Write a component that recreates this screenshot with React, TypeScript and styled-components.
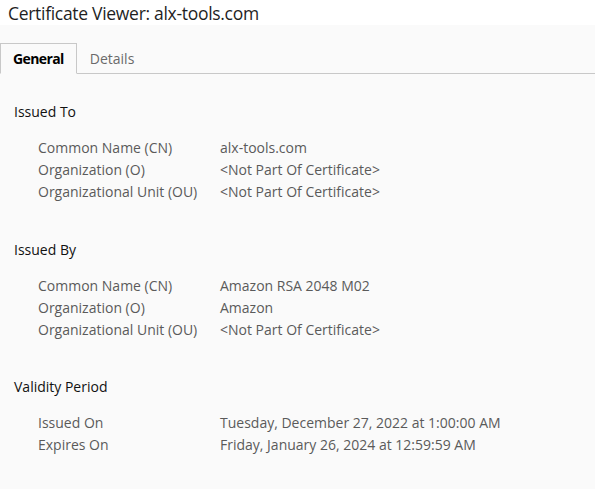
import React from "react";
import styled, { createGlobalStyle } from "styled-components";

const Global = createGlobalStyle`
  html, body { margin: 0; padding: 0; background: #fafafa; }
  body { font-family: "Open Sans", "Noto Sans", sans-serif; }
`;

const Page = styled.div`
  width: 595px;
  height: 489px;
  background: #fafafa;
  display: flex;
  flex-direction: column;
  overflow: hidden;
  & > * { flex-shrink: 0; }
`;

const TitleBar = styled.div`
  height: 25px;
  background: #ffffff;
  padding-left: 8px;
  display: flex;
  align-items: center;
  font-size: 17.5px;
  color: #1f1f1f;
  letter-spacing: -0.3px;
`;

const TabStrip = styled.div`
  margin-top: 17px;
  display: flex;
  align-items: flex-end;
  border-bottom: 1px solid #c8c8c8;
  height: 31px;
`;

const Tab = styled.div<{ $active?: boolean }>`
  height: ${(p) => (p.$active ? "31px" : "30px")};
  margin-bottom: ${(p) => (p.$active ? "-1px" : "0")};
  box-sizing: border-box;
  padding: 0 12px;
  display: flex;
  align-items: center;
  font-size: 14px;
  font-weight: ${(p) => (p.$active ? 700 : 400)};
  letter-spacing: ${(p) => (p.$active ? "-0.6px" : "0")};
  color: ${(p) => (p.$active ? "#000" : "#6a6a6a")};
  background: #fafafa;
  border: 1px solid ${(p) => (p.$active ? "#c8c8c8" : "transparent")};
  border-bottom: ${(p) => (p.$active ? "1px solid #fafafa" : "none")};
`;

const Content = styled.div`
  padding: 27px 0 0 14px;
  display: flex;
  flex-direction: column;
`;

const Section = styled.section`
  margin-bottom: 36px;
  &:nth-of-type(2) { margin-bottom: 35px; }
`;

const Heading = styled.div`
  font-size: 14px;
  color: #111;
  line-height: 22px;
  margin-bottom: 14px;
`;

const Grid = styled.div`
  display: grid;
  grid-template-columns: 182px 1fr;
  padding-left: 24px;
  font-size: 14px;
  line-height: 22px;
  color: #5a5a5a;
`;

const Cell = styled.div`
  white-space: nowrap;
`;

type Row = [string, string];

const sections: { title: string; rows: Row[] }[] = [
  {
    title: "Issued To",
    rows: [
      ["Common Name (CN)", "alx-tools.com"],
      ["Organization (O)", "<Not Part Of Certificate>"],
      ["Organizational Unit (OU)", "<Not Part Of Certificate>"],
    ],
  },
  {
    title: "Issued By",
    rows: [
      ["Common Name (CN)", "Amazon RSA 2048 M02"],
      ["Organization (O)", "Amazon"],
      ["Organizational Unit (OU)", "<Not Part Of Certificate>"],
    ],
  },
  {
    title: "Validity Period",
    rows: [
      ["Issued On", "Tuesday, December 27, 2022 at 1:00:00 AM"],
      ["Expires On", "Friday, January 26, 2024 at 12:59:59 AM"],
    ],
  },
];

export default function App() {
  return (
    <>
      <Global />
      <Page>
        <TitleBar>Certificate Viewer: alx-tools.com</TitleBar>
        <TabStrip>
          <Tab $active>General</Tab>
          <Tab>Details</Tab>
        </TabStrip>
        <Content>
          {sections.map((s) => (
            <Section key={s.title}>
              <Heading>{s.title}</Heading>
              <Grid>
                {s.rows.map(([k, v]) => (
                  <React.Fragment key={k}>
                    <Cell>{k}</Cell>
                    <Cell>{v}</Cell>
                  </React.Fragment>
                ))}
              </Grid>
            </Section>
          ))}
        </Content>
      </Page>
    </>
  );
}
